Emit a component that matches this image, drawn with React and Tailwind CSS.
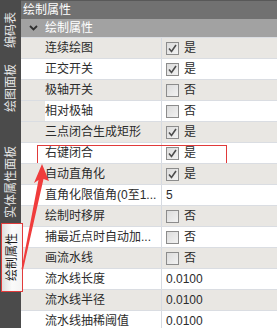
import React from 'react';

const rows = [
    { name: '连续绘图', type: 'check', on: true },
    { name: '正交开关', type: 'check', on: true },
    { name: '极轴开关', type: 'check', on: false },
    { name: '相对极轴', type: 'check', on: false, gutter: true },
    { name: '三点闭合生成矩形', type: 'check', on: true },
    { name: '右键闭合', type: 'check', on: true, mark: true },
    { name: '自动直角化', type: 'check', on: true },
    { name: '直角化限值角(0至1...', type: 'text', value: '5' },
    { name: '绘制时移屏', type: 'check', on: false },
    { name: '捕最近点时自动加...', type: 'check', on: false },
    { name: '画流水线', type: 'check', on: false },
    { name: '流水线长度', type: 'text', value: '0.0100' },
    { name: '流水线半径', type: 'text', value: '0.0100' },
    { name: '流水线抽稀阈值', type: 'text', value: '0.0100' },
];

const tabs = [
    { label: '编码表', cls: 'h-[60px] justify-center' },
    { label: '绘图面板', cls: 'h-[57px] justify-center' },
    { label: '实体属性面板', cls: 'h-[106px] justify-end pb-[5px]' },
];

function CheckBox({ on }) {
    return (
        <span className="w-[13px] h-[13px] border border-[#8c8c8c] bg-gradient-to-br from-[#dcdcdc] to-[#f2f2f2] flex items-center justify-center shrink-0">
            {on && (
                <svg width="9" height="9" viewBox="0 0 9 9">
                    <path d="M1 4.5 L3.5 7.5 L8 1" fill="none" stroke="#4d4d4d" strokeWidth="1.6" />
                </svg>
            )}
        </span>
    );
}

function VerticalLabel({ text, className }) {
    return (
        <span
            className={`[writing-mode:vertical-rl] [text-orientation:sideways] rotate-180 text-[12px] leading-none ${className}`}
        >
            {text}
        </span>
    );
}

function App() {
    return (
        <div
            className="w-[277px] h-[328px] overflow-hidden flex bg-[#4b4b4b] relative"
            style={{ fontFamily: "'Liberation Sans', 'Noto Sans CJK SC', sans-serif" }}
        >
            {/* left tabs */}
            <div className="w-[21px] shrink-0 flex flex-col">
                {tabs.map((t) => (
                    <div key={t.label} className={`flex flex-col items-center ${t.cls}`}>
                        <VerticalLabel text={t.label} className="text-[#e6e6e6]" />
                    </div>
                ))}
                <div className="relative z-10 ml-px w-[22px] h-[69px] border border-[#e23b3b] bg-gradient-to-r from-[#dedede] via-[#fafafa] to-[#f4f4f4] flex flex-col items-center justify-center">
                    <VerticalLabel text="绘制属性" className="text-[#1a1a1a]" />
                </div>
            </div>

            {/* property grid */}
            <div className="flex-1 flex flex-col bg-white">
                <div className="h-[19px] bg-[#717171] border-t border-[#585858] flex items-center pl-[2px] text-white text-[12px]">
                    绘制属性
                </div>
                <div className="h-px bg-white" />
                <div className="h-[20px] bg-[#a2a2a2] flex items-center text-white text-[12px]">
                    <span className="w-[24px] flex justify-center">
                        <svg width="9" height="6" viewBox="0 0 9 6">
                            <path d="M1 1 L4.5 4.5 L8 1" fill="none" stroke="#2f2f2f" strokeWidth="1.8" />
                        </svg>
                    </span>
                    <span>绘制属性</span>
                </div>
                {rows.map((r, i) => (
                    <div
                        key={r.name}
                        className={`relative h-[21px] shrink-0 border-t border-[#dadde2] flex text-[12px] text-[#2b2b2b] ${
                            i % 2 === 0 ? 'bg-[#e9e7e3]' : 'bg-white'
                        }`}
                    >
                        <div className="w-[140px] shrink-0 flex items-center">
                            <span className={`w-[24px] h-full shrink-0 ${r.gutter ? 'bg-[#e9e7e3]' : ''}`} />
                            <span className="whitespace-nowrap overflow-hidden">{r.name}</span>
                        </div>
                        <div className="flex-1 border-l border-[#d6dae1] flex items-center pl-[4px] gap-[5px]">
                            {r.type === 'check' ? (
                                <>
                                    <CheckBox on={r.on} />
                                    <span>{r.on ? '是' : '否'}</span>
                                </>
                            ) : (
                                <span>{r.value}</span>
                            )}
                        </div>
                        {r.mark && (
                            <div className="absolute left-[16px] top-[2px] w-[190px] h-[19px] border border-[#e03a3a] pointer-events-none" />
                        )}
                    </div>
                ))}
            </div>

            {/* annotation arrow */}
            <svg className="absolute left-0 top-0 pointer-events-none z-20" width="277" height="328">
                <polygon
                    points="42,164 49,181 43.5,179 23,270 21.5,269 38.5,180 34,183"
                    fill="#f03c3c"
                />
            </svg>
        </div>
    );
}

export default App;
